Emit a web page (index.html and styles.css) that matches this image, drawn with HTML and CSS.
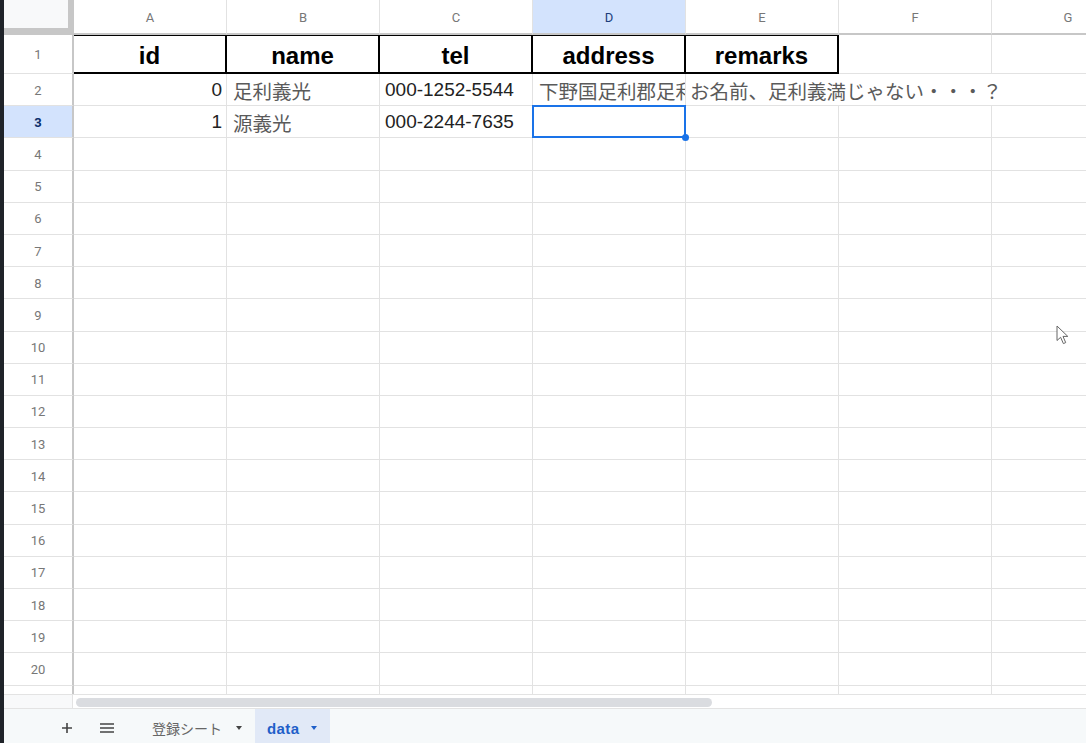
FILE: index.html
```html
<!DOCTYPE html>
<html lang="ja">
<head>
<meta charset="utf-8">
<title>data</title>
<link rel="stylesheet" href="styles.css">
</head>
<body>
<div class="app">
  <div class="edge"></div>
  <div class="main">
    <div class="sheet">
      <div class="grid">
        <div class="c corner"></div>
        <div class="c ch">A</div><div class="c ch">B</div><div class="c ch">C</div><div class="c ch sel-ch">D</div><div class="c ch">E</div><div class="c ch">F</div><div class="c ch">G</div>

        <div class="c rh">1</div>
        <div class="c h1">id</div><div class="c h1">name</div><div class="c h1">tel</div><div class="c h1">address</div><div class="c h1">remarks</div><div class="c"></div><div class="c"></div>

        <div class="c rh">2</div>
        <div class="c num">0</div><div class="c jp">足利義光</div><div class="c">000-1252-5544</div><div class="c jp">下野国足利郡足利</div><div class="c jp span3">お名前、足利義満じゃない・・・？</div>

        <div class="c rh sel-rh">3</div>
        <div class="c num">1</div><div class="c jp">源義光</div><div class="c">000-2244-7635</div><div class="c sel"></div><div class="c"></div><div class="c"></div><div class="c"></div>

        <div class="c rh">4</div><div class="c"></div><div class="c"></div><div class="c"></div><div class="c"></div><div class="c"></div><div class="c"></div><div class="c"></div>
        <div class="c rh">5</div><div class="c"></div><div class="c"></div><div class="c"></div><div class="c"></div><div class="c"></div><div class="c"></div><div class="c"></div>
        <div class="c rh">6</div><div class="c"></div><div class="c"></div><div class="c"></div><div class="c"></div><div class="c"></div><div class="c"></div><div class="c"></div>
        <div class="c rh">7</div><div class="c"></div><div class="c"></div><div class="c"></div><div class="c"></div><div class="c"></div><div class="c"></div><div class="c"></div>
        <div class="c rh">8</div><div class="c"></div><div class="c"></div><div class="c"></div><div class="c"></div><div class="c"></div><div class="c"></div><div class="c"></div>
        <div class="c rh">9</div><div class="c"></div><div class="c"></div><div class="c"></div><div class="c"></div><div class="c"></div><div class="c"></div><div class="c"></div>
        <div class="c rh">10</div><div class="c"></div><div class="c"></div><div class="c"></div><div class="c"></div><div class="c"></div><div class="c"></div><div class="c"></div>
        <div class="c rh">11</div><div class="c"></div><div class="c"></div><div class="c"></div><div class="c"></div><div class="c"></div><div class="c"></div><div class="c"></div>
        <div class="c rh">12</div><div class="c"></div><div class="c"></div><div class="c"></div><div class="c"></div><div class="c"></div><div class="c"></div><div class="c"></div>
        <div class="c rh">13</div><div class="c"></div><div class="c"></div><div class="c"></div><div class="c"></div><div class="c"></div><div class="c"></div><div class="c"></div>
        <div class="c rh">14</div><div class="c"></div><div class="c"></div><div class="c"></div><div class="c"></div><div class="c"></div><div class="c"></div><div class="c"></div>
        <div class="c rh">15</div><div class="c"></div><div class="c"></div><div class="c"></div><div class="c"></div><div class="c"></div><div class="c"></div><div class="c"></div>
        <div class="c rh">16</div><div class="c"></div><div class="c"></div><div class="c"></div><div class="c"></div><div class="c"></div><div class="c"></div><div class="c"></div>
        <div class="c rh">17</div><div class="c"></div><div class="c"></div><div class="c"></div><div class="c"></div><div class="c"></div><div class="c"></div><div class="c"></div>
        <div class="c rh">18</div><div class="c"></div><div class="c"></div><div class="c"></div><div class="c"></div><div class="c"></div><div class="c"></div><div class="c"></div>
        <div class="c rh">19</div><div class="c"></div><div class="c"></div><div class="c"></div><div class="c"></div><div class="c"></div><div class="c"></div><div class="c"></div>
        <div class="c rh">20</div><div class="c"></div><div class="c"></div><div class="c"></div><div class="c"></div><div class="c"></div><div class="c"></div><div class="c"></div>
        <div class="c rh"></div><div class="c"></div><div class="c"></div><div class="c"></div><div class="c"></div><div class="c"></div><div class="c"></div><div class="c"></div>
      </div>
    </div>
    <div class="hscroll">
      <div class="hs-corner"></div>
      <div class="hs-track"><div class="hs-thumb"></div></div>
    </div>
    <div class="tabs">
      <div class="tbtn">
        <svg width="10" height="10" viewBox="0 0 10 10"><path d="M5 0V10M0 5H10" stroke="#444" stroke-width="1.6"/></svg>
      </div>
      <div class="tbtn">
        <svg width="14" height="10" viewBox="0 0 14 10"><path d="M0 1H14M0 5H14M0 9H14" stroke="#444" stroke-width="1.6"/></svg>
      </div>
      <div class="tab">
        <span class="tab-label">登録シート</span>
        <span class="caret"></span>
      </div>
      <div class="tab active">
        <span class="tab-label">data</span>
        <span class="caret"></span>
      </div>
    </div>
  </div>
</div>
<svg class="cursor" width="14" height="20" viewBox="0 0 14 20">
  <path d="M1 1L1 15.5L4.6 12.3L7.4 18.6L9.7 17.6L7 11.4L11.8 11.4Z" fill="#fff" stroke="#666" stroke-width="1" stroke-linejoin="round"/>
</svg>
</body>
</html>
```

FILE: styles.css
```css
html, body {
  margin: 0;
  padding: 0;
  background: #ffffff;
}

.app {
  display: flex;
  height: 743px;
  width: 1086px;
  overflow: hidden;
  font-family: "Liberation Sans", Arial, sans-serif;
}

.edge {
  width: 4px;
  flex: none;
  background: #1f2329;
}

.main {
  flex: 1;
  min-width: 0;
  display: flex;
  flex-direction: column;
  overflow: hidden;
}

.sheet {
  height: 694px;
  flex: none;
  overflow: hidden;
}

.grid {
  display: grid;
  grid-template-columns: 70px repeat(7, 153px);
  grid-template-rows: 35px 39px repeat(20, 32.2px);
}

.c {
  box-sizing: border-box;
  border-right: 1px solid #e2e2e2;
  border-bottom: 1px solid #e2e2e2;
  display: flex;
  align-items: center;
  white-space: nowrap;
  overflow: hidden;
  padding: 1px 5px 0;
  font-size: 19px;
  color: #222;
  background: #fff;
}

.corner {
  background: #f8f9fa;
  border-right: 6px solid #c7c7c7;
  border-bottom: 7px solid #c7c7c7;
}

.ch {
  justify-content: center;
  border-bottom: 2px solid #c7c7c7;
  font-family: Roboto, "Liberation Sans", sans-serif;
  font-size: 13px;
  color: #777;
  padding-top: 1px;
}

.sel-ch {
  background: #d3e3fd;
  color: #1b3d7a;
}

.rh {
  justify-content: center;
  border-right: 2px solid #c7c7c7;
  font-family: Roboto, "Liberation Sans", sans-serif;
  font-size: 13px;
  color: #777;
}

.sel-rh {
  background: #d3e3fd;
  color: #0b2f6b;
  font-weight: bold;
}

.h1 {
  justify-content: center;
  font-weight: bold;
  font-size: 24px;
  color: #000;
  padding-top: 3px;
  border-top: 1px solid #000;
  border-right: 2px solid #000;
  border-bottom: 2px solid #000;
}

.num {
  justify-content: flex-end;
  padding-right: 4px;
}

.jp {
  font-family: "Noto Sans CJK JP", "Liberation Sans", sans-serif;
  font-size: 19.5px;
  color: #5a5a5a;
  padding-left: 6px;
}

.span3 {
  grid-column: span 3;
  border-right: none;
  padding-left: 4px;
}

.sel {
  position: relative;
  overflow: visible;
  z-index: 2;
}

.sel::before {
  content: "";
  position: absolute;
  left: -1px;
  top: -1px;
  right: -1px;
  bottom: -1px;
  border: 2px solid #1a73e8;
}

.sel::after {
  content: "";
  position: absolute;
  right: -4px;
  bottom: -4px;
  width: 7px;
  height: 7px;
  border-radius: 50%;
  background: #1a73e8;
}

.hscroll {
  height: 13px;
  flex: none;
  display: flex;
  border-top: 1px solid #e3e3e3;
  background: #fff;
}

.hs-corner {
  width: 69px;
  flex: none;
  box-sizing: border-box;
  background: #f8f9fa;
  border-right: 1px solid #e3e3e3;
}

.hs-track {
  flex: 1;
  padding: 3px 0 0 3px;
}

.hs-thumb {
  width: 636px;
  height: 9px;
  border-radius: 5px;
  background: #dadce0;
}

.tabs {
  flex: 1;
  display: flex;
  align-items: stretch;
  padding-left: 50px;
  border-top: 1px solid #e3e3e3;
  background: #f6f9fa;
  font-size: 14px;
}

.tbtn {
  width: 26px;
  display: flex;
  align-items: center;
  justify-content: center;
  margin-right: 14px;
  padding-top: 4px;
}

.tbtn + .tbtn {
  margin-right: 20px;
}

.tab {
  display: flex;
  align-items: center;
  gap: 14px;
  padding: 4px 13px 0 12px;
  color: #5f6368;
}

.tab-label {
  font-family: "Noto Sans CJK JP", "Liberation Sans", sans-serif;
  font-size: 14px;
  color: #666;
}

.caret {
  width: 0;
  height: 0;
  border-left: 3.5px solid transparent;
  border-right: 3.5px solid transparent;
  border-top: 4px solid #444;
}

.tab.active {
  background: #e1e9f7;
  gap: 12px;
}

.tab.active .tab-label {
  font-family: "Liberation Sans", Arial, sans-serif;
  font-weight: bold;
  font-size: 15px;
  letter-spacing: 0.4px;
  color: #1f5fc9;
}

.tab.active .caret {
  border-top-color: #1f5fc9;
}

.cursor {
  position: absolute;
  left: 1056px;
  top: 325px;
}
```
